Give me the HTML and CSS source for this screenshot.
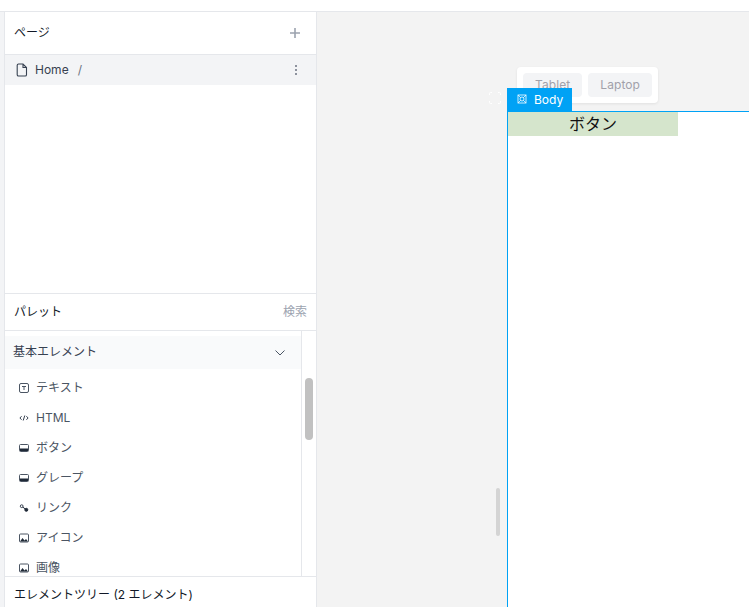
FILE: index.html
```html
<!DOCTYPE html>
<html lang="ja">
<head>
<meta charset="utf-8">
<title>Editor</title>
<link rel="stylesheet" href="styles.css">
</head>
<body>
<div class="app">
  <header class="topbar"></header>
  <main class="workspace">
    <div class="gutter"></div>
    <aside class="sidebar">
      <section class="pages">
        <div class="panel-head pages-head">
          <h2 class="title">ページ</h2>
          <svg class="plus" width="12" height="12" viewBox="0 0 12 12"><path d="M6 1v10M1 6h10" stroke="#9ca3af" stroke-width="1.6" fill="none"/></svg>
        </div>
        <div class="page-row">
          <svg class="file" width="12" height="14" viewBox="0 0 12 14"><path d="M2.5 1h4.5l3.5 3.5v7.2a1.3 1.3 0 0 1-1.3 1.3H2.5a1.3 1.3 0 0 1-1.3-1.3V2.3A1.3 1.3 0 0 1 2.5 1zM7 1v3.5h3.5" stroke="#374151" stroke-width="1.1" fill="none"/></svg>
          <span class="page-name">Home</span>
          <span class="page-path">/</span>
          <svg class="dots" width="4" height="12" viewBox="0 0 4 12"><circle cx="2" cy="2" r="1" fill="#6b7280"/><circle cx="2" cy="6" r="1" fill="#6b7280"/><circle cx="2" cy="10" r="1" fill="#6b7280"/></svg>
        </div>
      </section>
      <section class="palette">
        <div class="panel-head palette-head">
          <h2 class="title">パレット</h2>
          <span class="search">検索</span>
        </div>
        <div class="palette-body">
          <div class="palette-list">
            <div class="group-head">
              <span>基本エレメント</span>
              <svg width="12" height="8" viewBox="0 0 12 8"><path d="M1.5 1.5 6 6l4.500-4.500" stroke="#4b5563" stroke-width="1" fill="none"/></svg>
            </div>
            <ul class="items">
              <li class="item">
                <svg class="ico" width="10" height="10" viewBox="0 0 10 10"><rect x=".5" y=".5" width="9" height="9" rx="1.500" fill="none" stroke="#4b5563"/><path d="M3 3.500h4M5 3.500v3.500" stroke="#4b5563" fill="none"/></svg>
                <span>テキスト</span>
              </li>
              <li class="item">
                <svg class="ico" width="10" height="10" viewBox="0 0 10 10"><path d="M2.600 3.200 .9 5l1.700 1.800M7.400 3.200 9.100 5 7.400 6.800M5.800 2.500 4.200 7.500" stroke="#374151" stroke-width="1" fill="none"/></svg>
                <span>HTML</span>
              </li>
              <li class="item">
                <svg class="ico" width="10" height="10" viewBox="0 0 10 10"><rect x=".5" y="1.500" width="9" height="7" rx="1" fill="none" stroke="#4b5563"/><rect x="1" y="5.500" width="8" height="2.500" fill="#1f2937"/></svg>
                <span>ボタン</span>
              </li>
              <li class="item">
                <svg class="ico" width="10" height="10" viewBox="0 0 10 10"><rect x=".5" y="1.500" width="9" height="7" rx="1" fill="none" stroke="#4b5563"/><rect x="1" y="5.500" width="8" height="2.500" fill="#1f2937"/></svg>
                <span>グレープ</span>
              </li>
              <li class="item">
                <svg class="ico" width="10" height="10" viewBox="0 0 10 10"><circle cx="2.700" cy="3.200" r="1.400" fill="none" stroke="#374151"/><circle cx="7.300" cy="6.800" r="1.500" fill="#1f2937" stroke="#1f2937"/><path d="M3.700 4 6.300 6" stroke="#1f2937"/></svg>
                <span>リンク</span>
              </li>
              <li class="item">
                <svg class="ico" width="10" height="10" viewBox="0 0 10 10"><rect x=".5" y="1" width="9" height="8" rx="1" fill="none" stroke="#4b5563"/><path d="M1 8.500l2.500-3.500L5.500 7.500l1.500-1.500L9 8.500z" fill="#1f2937"/></svg>
                <span>アイコン</span>
              </li>
              <li class="item">
                <svg class="ico" width="10" height="10" viewBox="0 0 10 10"><rect x=".5" y="1" width="9" height="8" rx="1" fill="none" stroke="#4b5563"/><path d="M1 8.500l2.500-3.500L5.500 7.500l1.500-1.500L9 8.500z" fill="#1f2937"/></svg>
                <span>画像</span>
              </li>
            </ul>
          </div>
          <div class="scrolltrack"><div class="scrollthumb"></div></div>
        </div>
      </section>
      <section class="tree">
        <h2 class="title">エレメントツリー (2 エレメント)</h2>
      </section>
    </aside>
    <div class="canvas">
      <div class="breakpoints">
        <span class="bp">Tablet</span>
        <span class="bp">Laptop</span>
      </div>
      <div class="resize-handle"></div>
      <svg class="drag-marker" width="12" height="12" viewBox="0 0 12 12"><path d="M.5 3V1.500a1 1 0 0 1 1-1H3M9 .5h1.500a1 1 0 0 1 1 1V3M11.500 9v1.500a1 1 0 0 1-1 1H9M3 11.500H1.500a1 1 0 0 1-1-1V9" stroke="#fff" fill="none"/></svg>
      <div class="frame">
        <div class="frame-btn">ボタン</div>
      </div>
      <div class="frame-tag">
        <svg width="10" height="10" viewBox="0 0 10 10"><rect x="1" y="1" width="8" height="8" fill="none" stroke="#fff" stroke-width=".8"/><path d="M1 1l8 8M9 1 1 9" stroke="#fff" stroke-width=".7"/><circle cx="5" cy="5" r="2" fill="#00a2f5" stroke="#fff" stroke-width=".8"/></svg>
        <span>Body</span>
      </div>
    </div>
  </main>
</div>
</body>
</html>
```
FILE: styles.css
```css
* { box-sizing: border-box; }
html, body { margin: 0; padding: 0; height: 100%; overflow: hidden; }
body { font-family: Inter, "Noto Sans CJK JP", sans-serif; color: #1f2937; background: #f3f3f3; }
.app { width: 749px; height: 607px; display: flex; flex-direction: column; }
.topbar { height: 12px; background: #fff; border-bottom: 1px solid #e5e7eb; flex: none; }
.workspace { flex: 1; display: flex; min-height: 0; }
.gutter { width: 4px; flex: none; background: #f3f4f6; }
.sidebar { width: 313px; flex: none; background: #fff; border-left: 1px solid #e5e7eb; border-right: 1px solid #e5e7eb; display: flex; flex-direction: column; }
.title { margin: 0; font-size: 12px; font-weight: 400; line-height: 16px; color: #111827; }
.panel-head { display: flex; align-items: center; justify-content: space-between; padding: 0 9px; }
.pages { height: 282px; flex: none; border-bottom: 1px solid #e5e7eb; }
.pages-head { height: 43px; border-bottom: 1px solid #e5e7eb; padding: 0 15px 0 9px; }
.page-row { height: 30px; background: #f3f4f6; display: flex; align-items: center; padding: 0 18px 0 11px; font-size: 12px; line-height: 14px; color: #374151; }
.file { margin-right: 7px; }
.page-name { margin-right: 9px; }
.page-path { color: #6b7280; flex: 1; }
.palette { flex: 1; min-height: 0; display: flex; flex-direction: column; }
.palette-head { height: 37px; flex: none; border-bottom: 1px solid #e5e7eb; }
.search { font-size: 12px; line-height: 14px; color: #9ca3af; }
.palette-body { flex: 1; min-height: 0; display: flex; overflow: hidden; }
.palette-list { flex: 1; min-width: 0; padding-top: 5px; }
.group-head { height: 33px; background: #f9fafb; display: flex; align-items: center; justify-content: space-between; padding: 0 15px 0 8px; font-size: 12px; line-height: 14px; color: #374151; }
.group-head span { margin-top: -2px; }
.items { list-style: none; margin: 0; padding: 4px 0 0; }
.item { height: 30px; display: flex; align-items: center; gap: 7px; padding-left: 14px; font-size: 12px; line-height: 14px; color: #4b5563; }
.item span { margin-top: -1px; }
.ico { flex: none; }
.scrolltrack { width: 15px; flex: none; background: #fff; border-left: 1px solid #e5e7eb; padding: 47px 3px 0 3px; }
.scrollthumb { width: 8px; height: 62px; border-radius: 4px; background: #c1c1c1; }
.tree { height: 31px; flex: none; border-top: 1px solid #e5e7eb; padding: 10px 9px 0; }
.canvas { flex: 1; position: relative; background: #f3f3f3; overflow: hidden; }
.breakpoints { position: absolute; left: 200px; top: 55px; display: flex; gap: 6px; padding: 6px; background: #fff; border-radius: 4px; box-shadow: 0 1px 3px rgba(0,0,0,.08); }
.bp { padding: 0 12px 2px; height: 24px; display: flex; align-items: center; justify-content: center; background: #f3f4f6; border-radius: 4px; font-size: 12px; letter-spacing: .08px; color: #a1a1aa; }
.resize-handle { position: absolute; left: 179px; top: 476px; width: 4px; height: 48px; border-radius: 2px; background: #d4d4d4; }
.drag-marker { position: absolute; left: 172px; top: 80px; }
.frame { position: absolute; left: 190px; top: 99px; width: 300px; height: 520px; background: #fff; border-top: 1px solid #00a2f5; border-left: 1px solid #00a2f5; }
.frame-btn { width: 170px; height: 24px; background: #d5e5cc; color: #111; display: flex; align-items: center; justify-content: center; font-size: 16px; line-height: 24px; }
.frame-tag { position: absolute; left: 190px; top: 76px; width: 65px; height: 24px; background: #00a2f5; color: #fff; display: flex; align-items: center; gap: 7px; padding: 0 0 2px 10px; font-size: 12px; font-weight: 400; }
```
